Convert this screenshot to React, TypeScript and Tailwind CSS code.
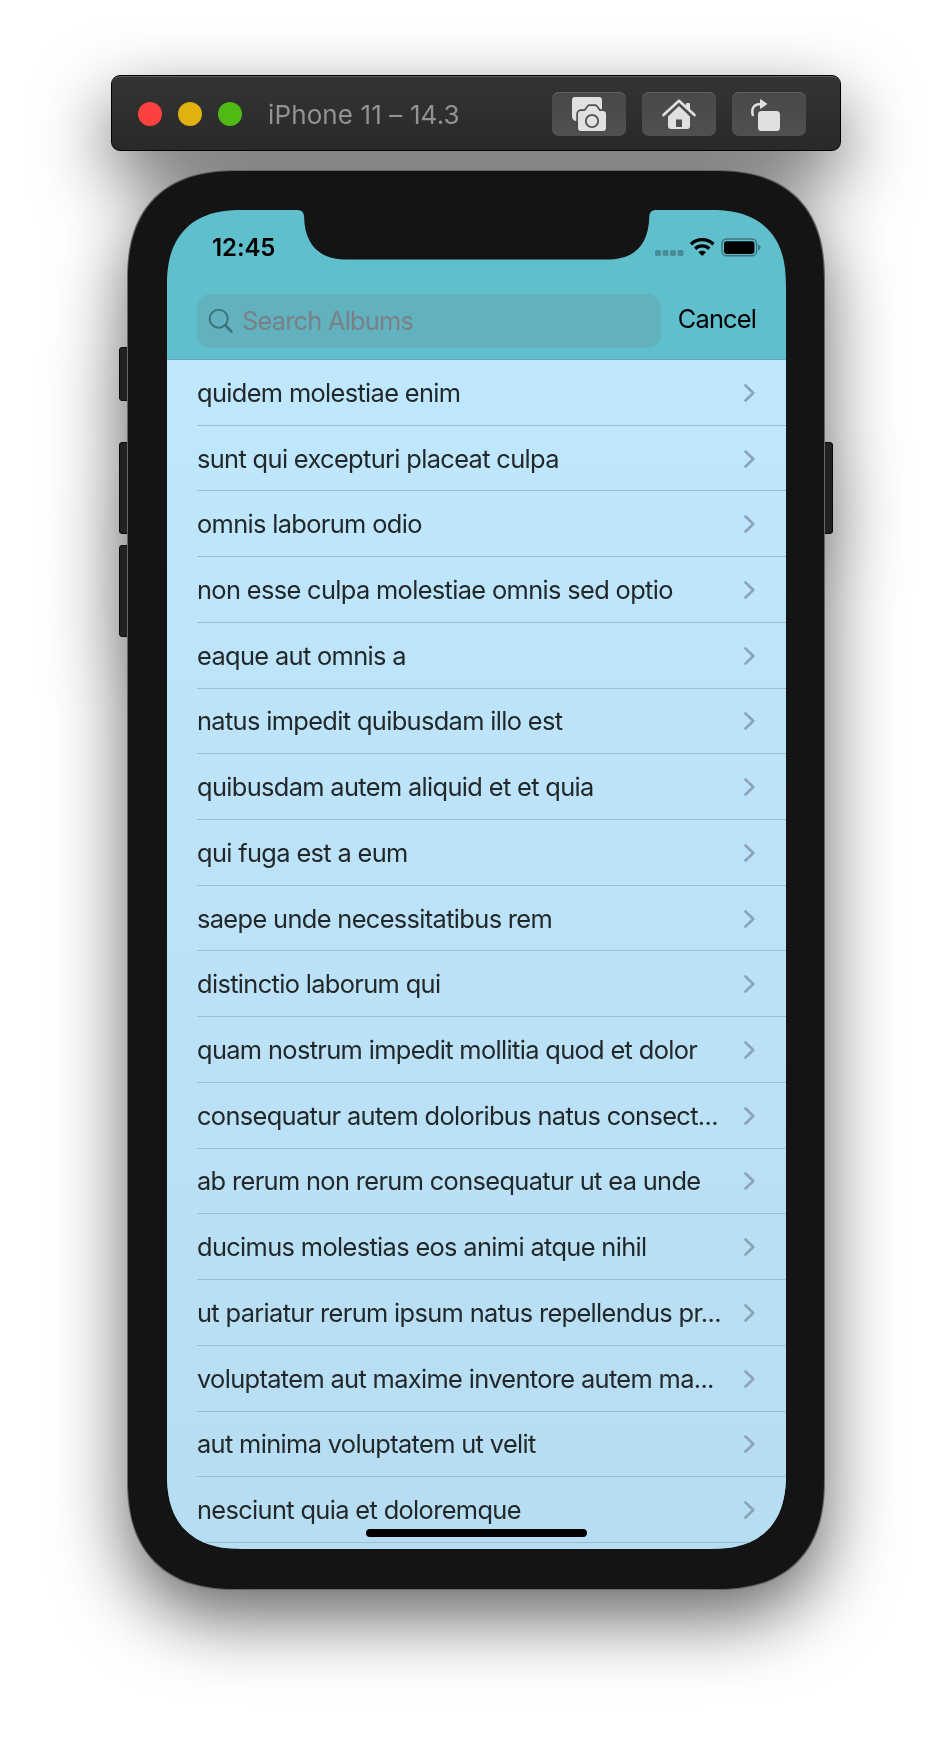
import React from "react";

const albums: { title: string }[] = [
  { title: "quidem molestiae enim" },
  { title: "sunt qui excepturi placeat culpa" },
  { title: "omnis laborum odio" },
  { title: "non esse culpa molestiae omnis sed optio" },
  { title: "eaque aut omnis a" },
  { title: "natus impedit quibusdam illo est" },
  { title: "quibusdam autem aliquid et et quia" },
  { title: "qui fuga est a eum" },
  { title: "saepe unde necessitatibus rem" },
  { title: "distinctio laborum qui" },
  { title: "quam nostrum impedit mollitia quod et dolor" },
  { title: "consequatur autem doloribus natus consect..." },
  { title: "ab rerum non rerum consequatur ut ea unde" },
  { title: "ducimus molestias eos animi atque nihil" },
  { title: "ut pariatur rerum ipsum natus repellendus pr..." },
  { title: "voluptatem aut maxime inventore autem ma..." },
  { title: "aut minima voluptatem ut velit" },
  { title: "nesciunt quia et doloremque" },
];

function ScreenshotIcon() {
  return (
    <svg width="74" height="44" viewBox="0 0 74 44" fill="none">
      <path d="M23 5h24a3 3 0 0 1 3 3v12H26v9h-2.500q-3.500-1-3.500-5V8a3 3 0 0 1 3-3z" fill="#e0e0e0" />
      <path d="M29 19h4l3.200-4.200q.6-.8 1.600-.8h5q1 0 1.600.8L47.500 19H51a3 3 0 0 1 3 3v14a3 3 0 0 1-3 3H29a3 3 0 0 1-3-3V22a3 3 0 0 1 3-3z" fill="#e0e0e0" stroke="#4d4d4d" strokeWidth="3.400" paintOrder="stroke" />
      <circle cx="40" cy="29" r="6.200" stroke="#4d4d4d" strokeWidth="1.800" />
    </svg>
  );
}

function HomeIcon() {
  return (
    <svg width="74" height="44" viewBox="0 0 74 44" fill="none">
      <path d="M26 24.500L37 14l11 10.500V34a3 3 0 0 1-3 3H29a3 3 0 0 1-3-3z" fill="#e0e0e0" />
      <path d="M21.500 23L37 8.800 52.500 23" stroke="#4d4d4d" strokeWidth="5.800" />
      <path d="M44 11.700q0-.7.700-.7h2.600q.7 0 .7.700V18.500L44 15z" fill="#e0e0e0" />
      <path d="M21.500 23L37 8.800 52.500 23" stroke="#e0e0e0" strokeWidth="2.600" strokeLinecap="round" strokeLinejoin="round" />
      <path d="M34 27.500h6V35h-6z" fill="#4d4d4d" />
    </svg>
  );
}

function RotateIcon() {
  return (
    <svg width="74" height="44" viewBox="0 0 74 44" fill="none">
      <rect x="26" y="19" width="22" height="20" rx="3.500" fill="#e0e0e0" />
      <path d="M20.800 23c-1.800-7 1.500-11.200 8.700-11" stroke="#e0e0e0" strokeWidth="2.500" strokeLinecap="round" />
      <path d="M28.500 7.600l6.300 4.400-6.300 4.400z" fill="#e0e0e0" stroke="#e0e0e0" strokeWidth="1" strokeLinejoin="round" />
    </svg>
  );
}

function ToolButton({ children }: { children: React.ReactNode }) {
  return (
    <button className="flex h-11 w-[74px] items-center justify-center rounded-[7px] bg-linear-to-b from-[#484848] to-[#505050] shadow-[inset_0_1px_0_#646464]">
      {children}
    </button>
  );
}

function TitleBar() {
  return (
    <header className="flex h-[76px] w-[730px] items-center rounded-[9px] border border-black bg-linear-to-b from-[#343434] to-[#292929] pl-[26px] pr-[34px] pt-[2px] shadow-[inset_0_1px_0_#606060]">
      <div className="flex gap-4">
        <span className="size-6 rounded-full bg-[#fc4140]" />
        <span className="size-6 rounded-full bg-[#dfb210]" />
        <span className="size-6 rounded-full bg-[#4fba13]" />
      </div>
      <h1 className="ml-[26px] whitespace-nowrap text-[26px] tracking-[0.120px] text-[#929292]">iPhone 11 – 14.3</h1>
      <div className="ml-auto flex gap-4">
        <ToolButton><ScreenshotIcon /></ToolButton>
        <ToolButton><HomeIcon /></ToolButton>
        <ToolButton><RotateIcon /></ToolButton>
      </div>
    </header>
  );
}

function StatusBar() {
  return (
    <div className="flex h-[84px] shrink-0 items-start justify-between pl-[45px] pr-[25px] pt-[21px]">
      <span className="mt-px text-[24px] font-semibold leading-8 tracking-[-0.100px] text-black">12:45</span>
      <svg width="106" height="20" viewBox="0 0 106 20" fill="none" className="mt-[6px]">
        <g fill="#000" fillOpacity=".26">
          <rect x="0" y="13" width="6" height="6" rx="1.500" />
          <rect x="7.500" y="13" width="6" height="6" rx="1.500" />
          <rect x="15" y="13" width="6" height="6" rx="1.500" />
          <rect x="22.500" y="13" width="6" height="6" rx="1.500" />
        </g>
        <g stroke="#000" strokeWidth="3.300">
          <path d="M36 7.200a16.200 16.200 0 0 1 22.400 0" />
          <path d="M40.200 11.700a10 10 0 0 1 14 0" />
        </g>
        <path d="M43.400 15.200a5.600 5.600 0 0 1 7.600 0L47.200 19z" fill="#000" />
        <rect x="67" y="2" width="34.600" height="16.800" rx="4.600" stroke="#000" strokeOpacity=".4" strokeWidth="1.400" />
        <rect x="69" y="4.200" width="30.400" height="12.800" rx="2.400" fill="#000" />
        <path d="M103.200 7.600q2.400.8 2.400 3t-2.400 3z" fill="#000" fillOpacity=".4" />
      </svg>
    </div>
  );
}

function SearchBar() {
  return (
    <div className="flex h-[66px] shrink-0 items-start border-b border-[#64a5b8] pl-[30px] pr-[30px]">
      <div className="flex h-[54px] w-[464px] items-center rounded-[14px] bg-[#61b2be] pl-[11px]">
        <svg width="26" height="26" viewBox="0 0 26 26" fill="none" stroke="#3d747c" strokeLinecap="round">
          <circle cx="10.700" cy="10.700" r="9" strokeWidth="2" />
          <path d="M17.500 17.500l5.900 5.900" strokeWidth="2.800" />
        </svg>
        <span className="ml-[8px] text-[25.400px] tracking-[-0.780px] text-[#7b7f86]">Search Albums</span>
      </div>
      <button className="ml-auto h-[51px] text-[25.400px] tracking-[-0.850px] text-black">Cancel</button>
    </div>
  );
}

function AlbumRow({ title }: { title: string }) {
  return (
    <li className="ml-[30px] flex h-[65.720px] shrink-0 items-center justify-between border-b border-[#9dbdd0] pr-[31px] pt-px">
      <span className="whitespace-nowrap text-[25.400px] tracking-[-0.650px] text-[#222829]">{title}</span>
      <svg width="11" height="18" viewBox="0 0 11 18" fill="none" className="shrink-0">
        <path d="M1.500 1.500L9.300 9l-7.800 7.500" stroke="#8aa5b7" strokeWidth="2.600" strokeLinecap="round" strokeLinejoin="round" />
      </svg>
    </li>
  );
}

export default function App() {
  return (
    <div className="h-[1738px] w-[952px] overflow-hidden bg-white pt-[75px] font-['Inter','Liberation_Sans',sans-serif]">
      <main className="flex flex-col items-center gap-5 drop-shadow-[0_28px_36px_rgba(0,0,0,0.600)]">
        <TitleBar />
        <div className="relative h-[1418px] w-[696px] rounded-[94px] bg-[#141414] p-[39px] pr-[38px] ring-1 ring-[#666] supports-[corner-shape:squircle]:rounded-[110px] supports-[corner-shape:squircle]:[corner-shape:superellipse(1.28)]">
          <i className="absolute -left-[9px] top-[176px] -z-10 h-[54px] w-4 rounded-[3px] border border-[#0a0a0a] bg-[#222]" />
          <i className="absolute -left-[9px] top-[271px] -z-10 h-[92px] w-4 rounded-[3px] border border-[#0a0a0a] bg-[#222]" />
          <i className="absolute -left-[9px] top-[374px] -z-10 h-[92px] w-4 rounded-[3px] border border-[#0a0a0a] bg-[#222]" />
          <i className="absolute -right-[9px] top-[271px] -z-10 h-[92px] w-4 rounded-[3px] border border-[#0a0a0a] bg-[#222]" />
          <div className="relative flex h-[1339px] flex-col overflow-hidden rounded-[64px] bg-[#60bfcc] supports-[corner-shape:squircle]:rounded-[76px] supports-[corner-shape:squircle]:[corner-shape:superellipse(1.3)]">
            <svg width="350" height="50" viewBox="0 0 350 50" className="absolute left-[130px] top-0 overflow-visible">
              <path d="M-1 0c6.500 0 8 2.500 8.200 8C7.500 30 19 49.400 48 49.400h264c28 0 39.500-18 40.200-41.400C352.400 2.500 354 0 360 0z" fill="#141414" />
            </svg>
            <StatusBar />
            <SearchBar />
            <ul className="flex h-[1190px] shrink-0 flex-col bg-linear-to-b from-[#bfe7fd] to-[#b7ddf2]">
              {albums.map((album) => (
                <AlbumRow key={album.title} title={album.title} />
              ))}
            </ul>
            <div className="absolute bottom-3 left-[199px] h-2 w-[221px] rounded-full bg-black" />
          </div>
        </div>
      </main>
    </div>
  );
}
